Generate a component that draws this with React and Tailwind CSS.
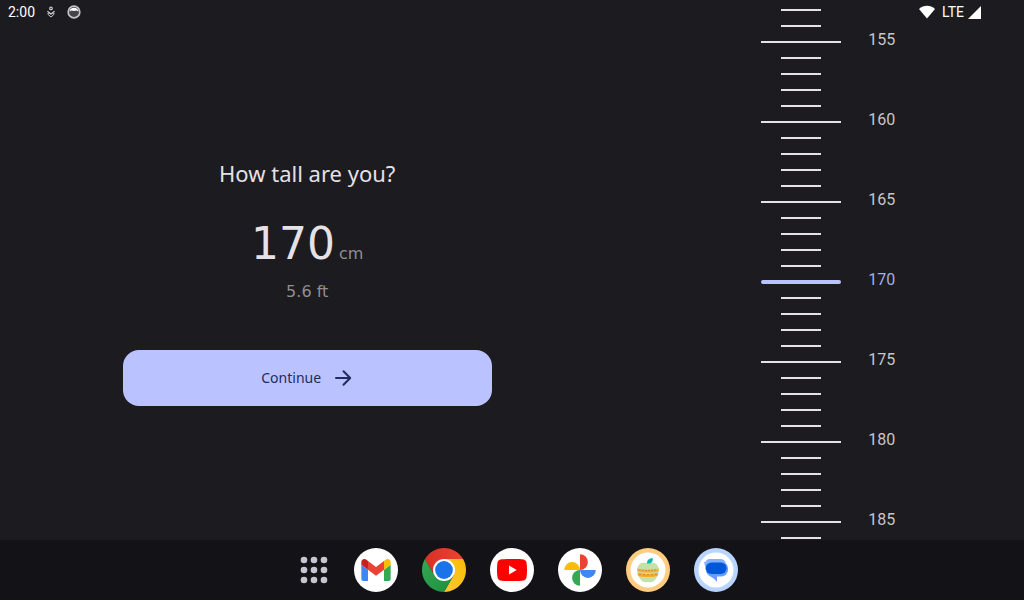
import { useState } from "react";

const MIN_HEIGHT = 50;
const MAX_HEIGHT = 250;
const VISIBLE_STEPS = 17;

function StatusBar() {
  return (
    <header className="absolute inset-x-0 top-0 flex h-6 items-center justify-between pl-2 pr-[43px] font-['Roboto',sans-serif] text-sm text-white">
      <div className="flex items-center gap-2.5">
        <span>2:00</span>
        <svg viewBox="0 0 12 12" className="size-3" fill="none" stroke="#c9c8cc">
          <circle cx="6" cy="2.4" r="1.3" strokeWidth="1.2" />
          <path d="M2.400 5.200 6 8l3.600-2.800" strokeWidth="1.300" />
          <path d="M2.600 8 6 11l3.400-3c-.6-1.200-2.400-1.200-3.400.2-1-1.400-2.800-1.400-3.400-.2" strokeWidth="1" />
        </svg>
        <svg viewBox="0 0 14 14" className="size-3.5">
          <circle cx="7" cy="7" r="5.8" fill="#45444a" stroke="#c4c3c7" strokeWidth="1.700" />
          <path d="M2.500 6.500a4.600 4.600 0 0 1 9 0L9.500 5.500 7 6 4.500 5.500z" fill="#fff" />
        </svg>
      </div>
      <div className="flex items-center gap-1">
        <svg viewBox="0 0 18 14" className="mr-0.5 h-3.5 w-[18px]" fill="#fff">
          <path d="M1 4C5.600-.3 12.400-.3 17 4L9 13.400z" />
        </svg>
        <span>LTE</span>
        <svg viewBox="0 0 13 13" className="size-[13px]" fill="#fff">
          <path d="M13 0v13H0z" />
        </svg>
      </div>
    </header>
  );
}

function Ruler({ height, setHeight }) {
  const steps = [];
  for (let i = height - VISIBLE_STEPS; i <= height + VISIBLE_STEPS; i++) {
    steps.push(i);
  }

  return (
    <ul className="flex w-full flex-col">
      {steps.map((step) => {
        const selected = step === height;
        const major = step % 5 === 0;

        return (
          <li key={step} className="h-4 shrink-0">
            <button
              aria-label={`${step} cm`}
              disabled={step < MIN_HEIGHT || step > MAX_HEIGHT}
              onClick={() => setHeight(step)}
              className="grid h-4 w-full grid-cols-[1fr_80px_1fr] grid-rows-[16px] items-center"
            >
              <span
                className={`col-start-2 justify-self-center ${
                  selected
                    ? "h-1 w-20 rounded-xs bg-[#bac3ff]"
                    : major
                      ? "h-0.5 w-20 bg-[#e5e1e6]"
                      : "h-0.5 w-10 bg-[#e5e1e6]"
                }`}
              />
              {major && (
                <span
                  className={`pb-1 pl-[27px] text-left font-['Roboto',sans-serif] text-base leading-4 ${
                    selected ? "text-[#a5ade4]" : "text-[#c7c5ca]"
                  }`}
                >
                  {step}
                </span>
              )}
            </button>
          </li>
        );
      })}
    </ul>
  );
}

function GmailIcon() {
  return (
    <svg viewBox="0 0 44 44" className="size-11">
      <circle cx="22" cy="22" r="22" fill="#fff" />
      <svg x="7" y="11" width="30" height="22" viewBox="52 42 88 66">
        <path fill="#4285f4" d="M58 108h14V74L52 59v43c0 3.32 2.69 6 6 6" />
        <path fill="#34a853" d="M120 108h14c3.32 0 6-2.69 6-6V59l-20 15" />
        <path fill="#fbbc04" d="M120 48v26l20-15v-8c0-7.42-8.47-11.65-14.4-7.2" />
        <path fill="#ea4335" d="M72 74V48l24 18 24-18v26L96 92" />
        <path fill="#c5221f" d="M52 51v8l20 15V48l-5.6-4.2c-5.94-4.45-14.4-.22-14.4 7.2" />
      </svg>
    </svg>
  );
}

function ChromeIcon() {
  return (
    <svg viewBox="0 0 44 44" className="size-11">
      <defs>
        <linearGradient id="chrome-red" x1="0" y1="0" x2="1" y2="0">
          <stop offset="0" stopColor="#d93025" />
          <stop offset="1" stopColor="#ea4335" />
        </linearGradient>
        <linearGradient id="chrome-yellow" x1="0" y1="1" x2="1" y2="0">
          <stop offset="0" stopColor="#fcc934" />
          <stop offset="1" stopColor="#fbbc04" />
        </linearGradient>
        <linearGradient id="chrome-green" x1="1" y1="1" x2="0" y2="0">
          <stop offset="0" stopColor="#1e8e3e" />
          <stop offset="1" stopColor="#34a853" />
        </linearGradient>
      </defs>
      <path fill="url(#chrome-red)" d="M2.95 11a22 22 0 0 1 38.1 0H22v11l-9.530 5.500z" />
      <path fill="url(#chrome-yellow)" d="M41.050 11A22 22 0 0 1 22 44l9.530-16.500L22 22V11z" />
      <path fill="url(#chrome-green)" d="M22 44A22 22 0 0 1 2.950 11l9.520 16.500L22 22l9.530 5.500z" />
      <circle cx="22" cy="22" r="11" fill="#fff" />
      <circle cx="22" cy="22" r="8.900" fill="#1a73e8" />
    </svg>
  );
}

function YouTubeIcon() {
  return (
    <svg viewBox="0 0 44 44" className="size-11">
      <circle cx="22" cy="22" r="22" fill="#fff" />
      <path
        fill="#f00"
        d="M22 11c5 0 9.500.1 11.700.600 1.400.4 2.300 1.300 2.700 2.700.8 3.800.8 11.600 0 15.400-.4 1.400-1.300 2.300-2.700 2.700-4.500.8-18.900.8-23.400 0-1.400-.4-2.300-1.300-2.700-2.700-.8-3.800-.8-11.600 0-15.400.4-1.400 1.300-2.300 2.700-2.700C12.500 11.100 17 11 22 11"
      />
      <path fill="#fff" d="m19 17.500 7.700 4.500-7.700 4.500z" />
    </svg>
  );
}

function PhotosIcon() {
  return (
    <svg viewBox="0 0 44 44" className="size-11">
      <circle cx="22" cy="22" r="22" fill="#fff" />
      <path fill="#ea4335" d="M22 6.200a7.900 7.900 0 0 1 0 15.800z" />
      <path fill="#4285f4" d="M37.800 22a7.900 7.900 0 0 1-15.800 0z" />
      <path fill="#34a853" d="M22 37.800A7.900 7.900 0 0 1 22 22z" />
      <path fill="#fbbc04" d="M6.200 22A7.900 7.900 0 0 1 22 22z" />
    </svg>
  );
}

function DietIcon() {
  return (
    <svg viewBox="0 0 44 44" className="size-11">
      <circle cx="22" cy="22" r="22" fill="#ffcc80" />
      <circle cx="22" cy="22" r="17.500" fill="#fff" />
      <path
        fill="#c5e1a5"
        d="M22 16c2-1.500 6-2 8.500.3 3.600 3.400 2.400 10.600-.8 14.700-2.200 2.900-4.400 3.700-7.700 2.900-3.300.8-5.500 0-7.700-2.900-3.200-4.100-4.400-11.300-.8-14.700C16 14 20 14.500 22 16"
      />
      <path fill="#ffb13b" d="M11 20.500c6 1.800 16 1.800 22 0l-.5 3.300c-6 1.400-15 1.400-21 0z" />
      <path fill="#ffa726" d="M11.500 25c6 1.500 15 1.500 21 0l-1 3c-5 1.300-14 1.300-19.500 0z" />
      <path
        stroke="#6d7048"
        strokeWidth=".8"
        d="M14 21.300v1.200M17 21.700V23M20 21.900v1.300M23 21.900v1.300M26 21.700V23M29 21.300v1.200M14 25.600v1.200M18 26v1.200M22 26v1.200M26 26v1.200M30 25.600v1.200"
      />
      <path fill="#00b8b0" d="M21.300 16c-1-3.500 1.500-6 5.500-5.800.3 3-1.300 5.300-4.300 5.300z" />
    </svg>
  );
}

function MessagesIcon() {
  return (
    <svg viewBox="0 0 44 44" className="size-11">
      <circle cx="22" cy="22" r="22" fill="#b8d4ff" />
      <circle cx="22" cy="22" r="17.500" fill="#fff" />
      <path fill="#82b1ff" d="M10 14h1.500c.6-1.800 2.300-3 4.500-3h10a6 6 0 0 1 6 5L30 25H15a6 6 0 0 1-3.500-5z" />
      <path fill="#669dff" d="M27 14.500h1.500a5.800 5.800 0 0 1 5.500 6V22a6.500 6.500 0 0 1-6.500 6.500H23V34c-1.500-2.300-3.600-3.900-6.500-5.500-3-1.600-4.500-3.500-4.500-6.500z" />
      <rect x="11.700" y="14.500" width="20.800" height="11.500" rx="5.700" fill="#0057d9" />
    </svg>
  );
}

const APPS = [
  { name: "Gmail", Icon: GmailIcon },
  { name: "Chrome", Icon: ChromeIcon },
  { name: "YouTube", Icon: YouTubeIcon },
  { name: "Photos", Icon: PhotosIcon },
  { name: "Diet", Icon: DietIcon },
  { name: "Messages", Icon: MessagesIcon },
];

function Taskbar() {
  return (
    <nav className="flex h-15 shrink-0 items-center justify-center gap-6 bg-[#131317]">
      <button aria-label="All apps" className="flex w-11 justify-end">
        <svg viewBox="0 0 32 32" className="size-8" fill="#c8c5d0">
          {[6, 16, 26].map((y) =>
            [6, 16, 26].map((x) => <circle key={`${x}-${y}`} cx={x} cy={y} r="3.300" />)
          )}
        </svg>
      </button>
      {APPS.map(({ name, Icon }) => (
        <button key={name} aria-label={name}>
          <Icon />
        </button>
      ))}
    </nav>
  );
}

export default function App() {
  const [height, setHeight] = useState(170);

  return (
    <div className="relative flex h-screen flex-col bg-[#1c1b20] text-[#e5e1e6]">
      <main className="flex min-h-0 flex-1 overflow-hidden pt-6">
        <section className="flex w-3/5 flex-col items-center justify-center font-['Noto_Sans',sans-serif]">
          <h1 className="text-[22px] leading-[30px]">How tall are you?</h1>
          <p className="mt-7 flex items-baseline gap-1 font-['DejaVu_Sans',sans-serif]">
            <span className="text-[44px] leading-14">{height}</span>
            <span className="text-base text-[#8f8e94]">cm</span>
          </p>
          <p className="mt-1.5 font-['DejaVu_Sans',sans-serif] text-base leading-7 text-[#8f8e94]">
            {(height / 30.48).toFixed(1)} ft
          </p>
          <button className="mt-11 flex h-14 w-3/5 items-center justify-center gap-3 rounded-2xl bg-[#bac3ff] text-sm text-[#222c61]">
            Continue
            <svg
              viewBox="0 0 20 20"
              className="size-5"
              fill="none"
              stroke="currentColor"
              strokeWidth="2"
              strokeLinecap="round"
              strokeLinejoin="round"
            >
              <path d="M3 10h14M10.500 3.200 17.200 10l-6.700 6.800" />
            </svg>
          </button>
        </section>
        <section className="flex w-2/5 items-center pr-9">
          <Ruler height={height} setHeight={setHeight} />
        </section>
      </main>
      <Taskbar />
      <StatusBar />
    </div>
  );
}
